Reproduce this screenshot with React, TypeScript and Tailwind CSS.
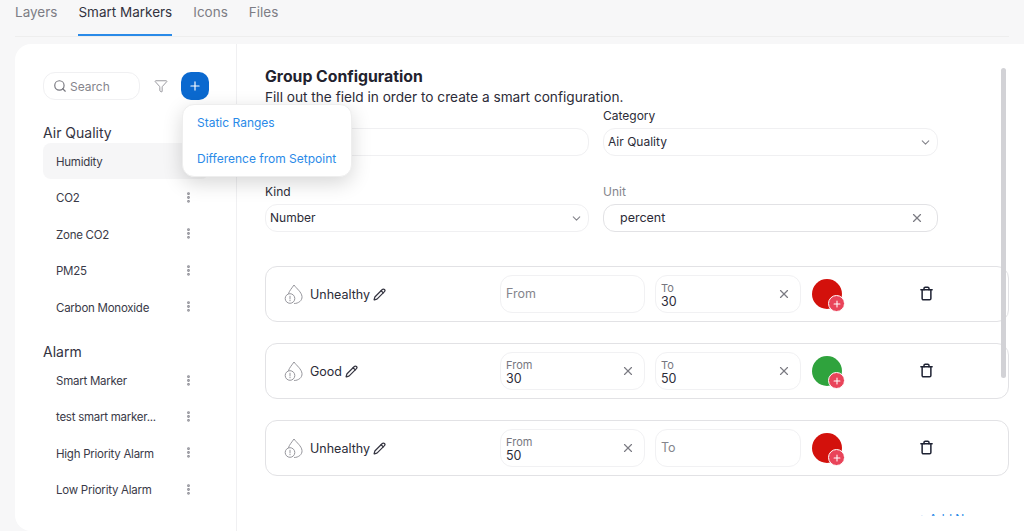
import { ChevronDown, EllipsisVertical, Filter, Pencil, Plus, Search, Trash, X } from "lucide-react"

const tabs = ["Layers", "Smart Markers", "Icons", "Files"]

const groups = [
    { title: "Air Quality", items: ["Humidity", "CO2", "Zone CO2", "PM25", "Carbon Monoxide"] },
    { title: "Alarm", items: ["Smart Marker", "test smart marker...", "High Priority Alarm", "Low Priority Alarm"] },
]

const ranges = [
    { name: "Unhealthy", from: "", to: "30", color: "bg-[#d3110c]" },
    { name: "Good", from: "30", to: "50", color: "bg-[#2fa33d]" },
    { name: "Unhealthy", from: "50", to: "", color: "bg-[#d3110c]" },
]

function DropIcon() {
    return (
        <svg width="20" height="22" viewBox="0 0 20 22" fill="none" stroke="#96969c" strokeWidth="1">
            <path d="M4.5 10.5 C5.5 7.5 8 5 10 2 C12.5 5.5 17.5 9 18 13.5 C18.4 17.5 14.5 20.5 10.5 20.5" strokeLinecap="round" />
            <circle cx="6" cy="15.5" r="4.8" />
            <path d="M6 13.2V15.8M6 17.2V17.8" strokeLinecap="round" />
        </svg>
    )
}

function RangeInput({ label, value, width }: { label: string; value: string; width: string }) {
    return (
        <div className={`${width} h-[38px] flex items-center justify-between pl-[5px] pr-[9px] rounded-xl border border-[#f1f1f3] bg-white`}>
            {value ? (
                <div className="flex flex-col pt-[2px]">
                    <span className="text-[11px] leading-[13px] text-[#77777f]">{label}</span>
                    <span className="text-[12.5px] leading-[14px] text-[#2c2c38]">{value}</span>
                </div>
            ) : (
                <span className="pt-[1px] text-[12.5px] text-[#85858c]">{label}</span>
            )}
            {value && <X size={14} className="text-[#7b7b83]" />}
        </div>
    )
}

export default function App() {
    return (
        <div className="relative h-[531px] w-[1024px] overflow-hidden bg-[#f7f7f8] font-['Inter',sans-serif] text-[#2c2c38]">
            <div className="h-[37px] mx-[15px] flex gap-[21px] border-b border-[#eeeeee]">
                {tabs.map((t) => (
                    <div
                        key={t}
                        className={`h-[36px] pt-[3px] text-[13.5px] leading-[18px] ${t === "Smart Markers" ? "text-[#33333f] border-b-2 border-[#2a8ae8]" : "text-[#7d7d85]"}`}
                    >
                        {t}
                    </div>
                ))}
            </div>

            <div className="mt-[7px] ml-[15px] h-[487px] flex bg-white rounded-l-2xl">
                <aside className="w-[222px] shrink-0 border-r border-[#f0f0f2] pl-[28px] pt-[28px]">
                    <div className="flex items-center w-[166px]">
                        <div className="w-[97px] h-[28px] flex items-center gap-[3px] pl-[9px] rounded-xl border border-[#f0f0f2]">
                            <Search size={14} className="text-[#77777f]" />
                            <span className="pt-[1px] text-[12px] text-[#85858c]">Search</span>
                        </div>
                        <Filter size={14} strokeWidth={1.4} className="ml-[14px] text-[#85858c]" />
                        <div className="ml-auto w-[28px] h-[28px] rounded-[10px] bg-[#0b69cf] flex items-center justify-center">
                            <Plus size={14} className="text-white" />
                        </div>
                    </div>

                    {groups.map((g, gi) => (
                        <div key={g.title} className={gi === 0 ? "mt-[23px]" : "mt-[17px]"}>
                            <div className="text-[14px] leading-[20px] text-[#33333f]">{g.title}</div>
                            {g.items.map((item, i) => (
                                <div
                                    key={item}
                                    className={`w-[166px] h-[36.4px] flex items-center justify-between pl-[13px] pr-[14px] rounded-lg ${gi === 0 && i === 0 ? "bg-[#f6f6f7]" : ""}`}
                                >
                                    <span className="pt-[3px] text-[11.5px] tracking-[-0.25px] text-[#3a3a48]">{item}</span>
                                    <EllipsisVertical size={13} strokeWidth={3.2} className="text-[#8f8f97]" />
                                </div>
                            ))}
                        </div>
                    ))}
                </aside>

                <main className="relative flex-1 h-[472px] overflow-hidden pl-[28px] pt-[23px]">
                    <h2 className="text-[15.8px] leading-[20px] font-bold text-[#22222e]">Group Configuration</h2>
                    <p className="text-[13.65px] leading-[20px] text-[#2c2c38]">Fill out the field in order to create a smart configuration.</p>

                    <div className="mt-[1px] grid grid-cols-[324px_335px] gap-x-[14px] gap-y-[28px] w-[673px]">
                        <div>
                            <div className="h-[16px] mb-[4px]" />
                            <div className="h-[28px] rounded-xl border border-[#f0f0f2]" />
                        </div>
                        <div>
                            <div className="text-[12px] leading-[16px] mb-[4px]">Category</div>
                            <div className="h-[28px] flex items-center justify-between pl-[4px] pr-[5px] rounded-xl border border-[#f0f0f2]">
                                <span className="text-[12px]">Air Quality</span>
                                <ChevronDown size={13} className="text-[#85858c]" />
                            </div>
                        </div>
                        <div>
                            <div className="text-[12px] leading-[16px] mb-[4px]">Kind</div>
                            <div className="h-[28px] flex items-center justify-between pl-[4px] pr-[5px] rounded-xl border border-[#f0f0f2]">
                                <span className="text-[12px]">Number</span>
                                <ChevronDown size={13} className="text-[#85858c]" />
                            </div>
                        </div>
                        <div>
                            <div className="text-[12px] leading-[16px] mb-[4px] text-[#85858c]">Unit</div>
                            <div className="h-[28px] flex items-center justify-between pl-[16px] pr-[13px] rounded-xl border border-[#e2e2e5]">
                                <span className="text-[12.5px]">percent</span>
                                <X size={14} className="text-[#7b7b83]" />
                            </div>
                        </div>
                    </div>

                    <div className="mt-[34px] flex flex-col gap-[21px] w-[744px]">
                        {ranges.map((r, i) => (
                            <div key={i} className="h-[56px] flex items-center pl-[18px] rounded-xl border border-[#e2e2e5]">
                                <div className="w-[216px] flex items-center gap-[6px]">
                                    <DropIcon />
                                    <span className="pt-[3px] text-[12.5px]">{r.name}</span>
                                    <Pencil size={13} strokeWidth={2.2} className="-ml-[3px] text-[#33333f]" />
                                </div>
                                <RangeInput label="From" value={r.from} width="w-[145px]" />
                                <div className="w-[10px]" />
                                <RangeInput label="To" value={r.to} width="w-[146px]" />
                                <div className="ml-[11px] relative w-[30px] h-[30px] rounded-full">
                                    <div className={`w-[30px] h-[30px] rounded-full ${r.color}`} />
                                    <div className="absolute -right-[3px] -bottom-[3px] w-[17px] h-[17px] rounded-full bg-[#e9445a] border border-white flex items-center justify-center">
                                        <Plus size={10} strokeWidth={2.5} className="text-white" />
                                    </div>
                                </div>
                                <Trash size={15} strokeWidth={2.4} className="ml-[77px] -mt-[1px] text-[#1e2233]" />
                            </div>
                        ))}
                    </div>

                    <div className="mt-[34px] w-[716px] text-right text-[12px] leading-[18px] text-[#2a8ae8]">+ Add New</div>

                    <div className="absolute left-[764px] top-[24px] w-[5px] h-[310px] rounded-full bg-[#d2d2d6]" />
                </main>
            </div>

            <div className="absolute left-[182px] top-[104px] w-[170px] h-[73px] rounded-xl bg-white border border-[#eeeeee] shadow-[0_6px_20px_rgba(0,0,0,0.16)] flex flex-col justify-center gap-[18px] pl-[14px] text-[12px] leading-[18px] text-[#2a8ae8]">
                <div>Static Ranges</div>
                <div>Difference from Setpoint</div>
            </div>
        </div>
    )
}
